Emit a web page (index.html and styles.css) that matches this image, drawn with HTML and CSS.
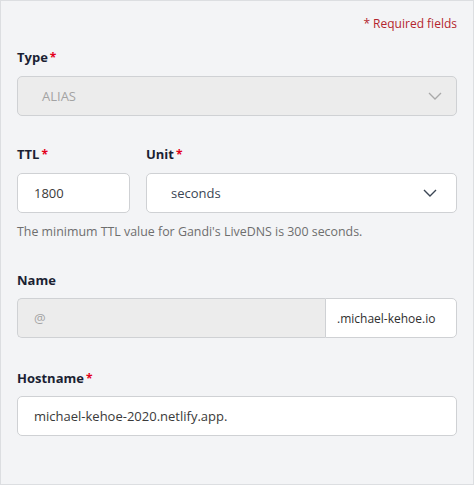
FILE: index.html
```html
<!DOCTYPE html>
<html>
<head>
<meta charset="utf-8">
<link rel="stylesheet" href="styles.css">
</head>
<body>
<div class="panel">
  <div class="required-note">* Required fields</div>

  <div class="field field-type">
    <div class="label">Type<span class="star">*</span></div>
    <div class="control select disabled">
      <span class="value">ALIAS</span>
      <svg class="chevron" width="14" height="8" viewBox="0 0 14 8"><path d="M1 1l6 6 6-6" fill="none" stroke="#a9a9a9" stroke-width="1.3"/></svg>
    </div>
  </div>

  <div class="field field-ttl">
    <div class="row">
      <div class="col-ttl">
        <div class="label">TTL<span class="star">*</span></div>
        <div class="control input"><span class="value">1800</span></div>
      </div>
      <div class="col-unit">
        <div class="label">Unit<span class="star">*</span></div>
        <div class="control select unit">
          <span class="value">seconds</span>
          <svg class="chevron" width="14" height="8" viewBox="0 0 14 8"><path d="M1 1l6 6 6-6" fill="none" stroke="#3b4654" stroke-width="1.4"/></svg>
        </div>
      </div>
    </div>
    <div class="help">The minimum TTL value for Gandi's LiveDNS is 300 seconds.</div>
  </div>

  <div class="field field-name">
    <div class="label">Name</div>
    <div class="group">
      <div class="control input disabled grow"><span class="value">@</span></div>
      <div class="addon">.michael-kehoe.io</div>
    </div>
  </div>

  <div class="field field-host">
    <div class="label">Hostname<span class="star">*</span></div>
    <div class="control input"><span class="value">michael-kehoe-2020.netlify.app.</span></div>
  </div>
</div>
</body>
</html>
```

FILE: styles.css
```css
html, body {
  margin: 0;
  padding: 0;
  background: #ffffff;
}
body {
  font-family: "Open Sans", "Noto Sans", sans-serif;
}
.panel {
  box-sizing: border-box;
  width: 474px;
  height: 485px;
  border: 1px solid #dcdee1;
  background: #f3f4f6;
  padding: 15px 16px 0 16px;
}
.required-note {
  text-align: right;
  font-size: 12px;
  line-height: 16px;
  height: 16px;
  color: #b3262e;
}
.label {
  font-size: 13px;
  line-height: 16px;
  height: 16px;
  font-weight: 700;
  color: #1b1f33;
  margin-bottom: 11px;
}
.star {
  color: #e3001b;
  margin-left: 2px;
  font-size: 12px;
  line-height: 0;
}
.field-type { margin-top: 17px; }
.field-ttl { margin-top: 30px; }
.field-name { margin-top: 32px; }
.field-name .label { margin-bottom: 10px; }
.field-host { margin-top: 32px; }
.field-host .label { margin-bottom: 10px; }

.control {
  box-sizing: border-box;
  height: 40px;
  border: 1px solid #cfd1d4;
  border-radius: 5px;
  background: #ffffff;
  display: flex;
  align-items: center;
  padding: 0 16px;
  font-size: 13px;
  color: #3a3a3a;
}
.select {
  padding: 0 14px 0 24px;
  justify-content: space-between;
}
.select.unit {
  padding-right: 19px;
  color: #3b4654;
}
.disabled {
  background: #ececec;
  color: #a3a3a3;
}
.row {
  display: flex;
  gap: 16px;
}
.col-ttl { width: 113px; }
.col-unit { flex: 1; }
.help {
  margin-top: 11px;
  font-size: 12.4px;
  line-height: 16px;
  height: 16px;
  color: #6e6e6e;
}
.group {
  display: flex;
}
.grow {
  flex: 1;
  border-radius: 5px 0 0 5px;
  border-right: none;
}
.addon {
  box-sizing: border-box;
  width: 132px;
  height: 40px;
  display: flex;
  align-items: center;
  padding: 0 0 0 11px;
  border: 1px solid #cfd1d4;
  border-radius: 0 5px 5px 0;
  background: #ffffff;
  font-size: 12px;
  color: #2f2f2f;
  white-space: nowrap;
  overflow: hidden;
}
.chevron { display: block; }
```
